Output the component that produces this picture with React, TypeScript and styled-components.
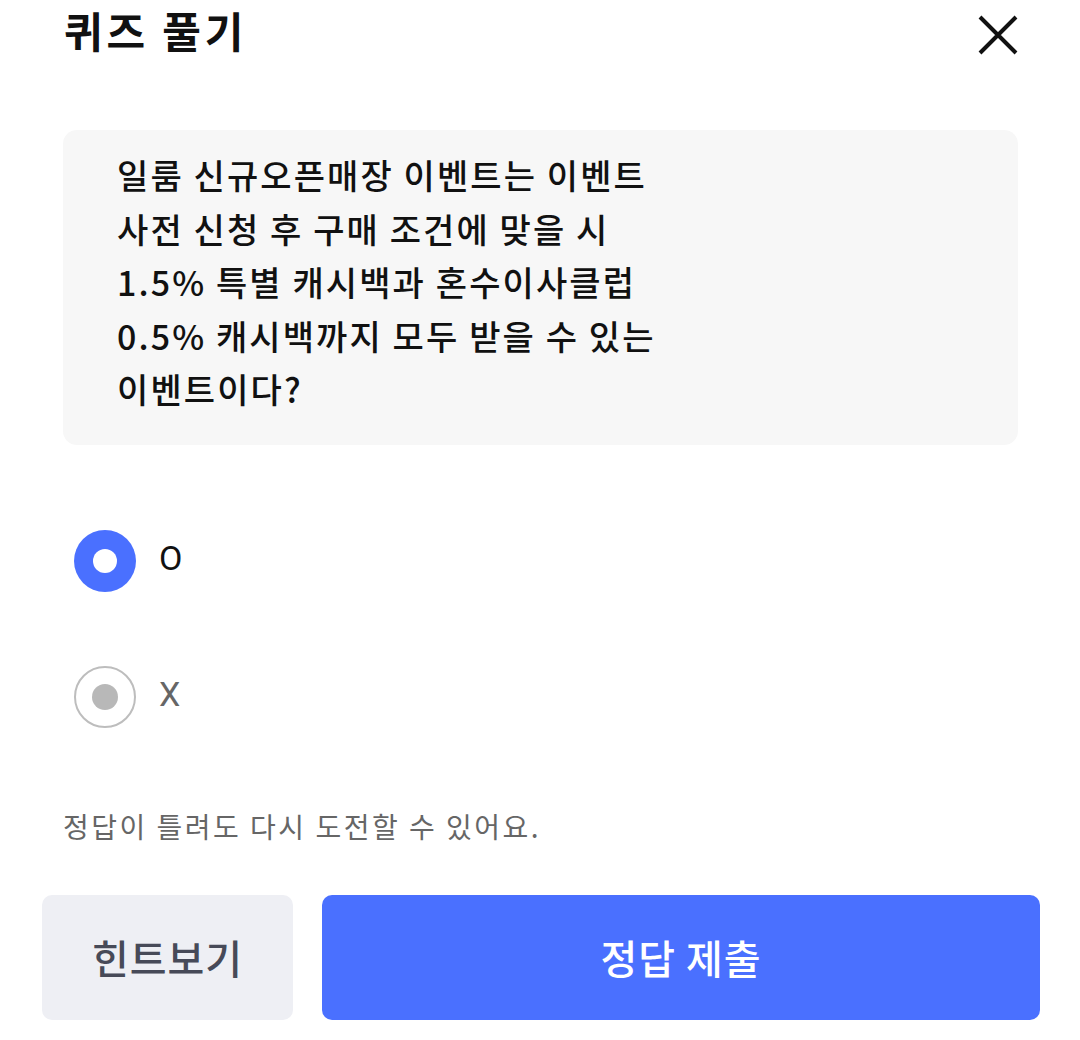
import React, {useState} from 'react'
import styled, {createGlobalStyle} from "styled-components"

const options = ['O', 'X']

function App() {
    const [picked, setPicked] = useState(0)

    return (
        <Main>
            <GlobalStyle />
            <Header>
                <Title>퀴즈 풀기</Title>
                <CloseButton aria-label="닫기">
                    <svg width="44" height="44" viewBox="0 0 44 44">
                        <path d="M4 4 L40 40 M40 4 L4 40" stroke="#111" strokeWidth="4" strokeLinecap="butt" />
                    </svg>
                </CloseButton>
            </Header>
            <Question>
                {`일룸 신규오픈매장 이벤트는 이벤트
사전 신청 후 구매 조건에 맞을 시
1.5% 특별 캐시백과 혼수이사클럽
0.5% 캐시백까지 모두 받을 수 있는
이벤트이다?`}
            </Question>
            <Options>
                {options.map((opt, i) => (
                    <Option key={opt} onClick={() => setPicked(i)}>
                        <Radio active={picked === i} />
                        <OptionLabel active={picked === i}>{opt}</OptionLabel>
                    </Option>
                ))}
            </Options>
            <Notice>정답이 틀려도 다시 도전할 수 있어요.</Notice>
            <Buttons>
                <HintButton>힌트보기</HintButton>
                <SubmitButton>정답 제출</SubmitButton>
            </Buttons>
        </Main>
    )
}

export default App

const GlobalStyle = createGlobalStyle`
    body {
        margin: 0;
        background: #fff;
        font-family: 'Noto Sans CJK KR', 'Noto Sans', sans-serif;
    }
`

const Main = styled.div`
    width: 1080px;
    height: 1040px;
    display: flex;
    flex-direction: column;
    overflow: hidden;
`

const Header = styled.div`
    display: flex;
    align-items: center;
    justify-content: space-between;
    height: 66px;
    padding: 0 60px 0 64px;
`

const Title = styled.h1`
    margin: 0;
    margin-top: -6px;
    font-size: 42px;
    font-weight: 700;
    color: #111;
    line-height: 66px;
    letter-spacing: 3.8px;
`

const CloseButton = styled.button`
    border: none;
    background: none;
    padding: 0;
    margin-top: 4px;
    display: flex;
    cursor: pointer;
`

const Question = styled.div`
    margin: 64px 62px 0 63px;
    background: #f7f7f7;
    border-radius: 14px;
    padding: 18px 50px 29px 54px;
    font-size: 34px;
    font-weight: 500;
    line-height: 53.5px;
    color: #111;
    white-space: pre-line;
    letter-spacing: 2.1px;
`

const Options = styled.div`
    display: flex;
    flex-direction: column;
    gap: 74px;
    margin: 85px 0 0 74px;
`

const Option = styled.div`
    display: flex;
    align-items: center;
    gap: 23px;
    cursor: pointer;
`

const Radio = styled.div<{active: boolean}>`
    width: 62px;
    height: 62px;
    border-radius: 50%;
    box-sizing: border-box;
    display: flex;
    align-items: center;
    justify-content: center;
    background: ${p => p.active ? '#4a70ff' : '#fff'};
    border: ${p => p.active ? 'none' : '2px solid #bdbdbd'};

    &::after {
        content: '';
        width: ${p => p.active ? 24 : 26}px;
        height: ${p => p.active ? 24 : 26}px;
        border-radius: 50%;
        background: ${p => p.active ? '#fff' : '#b8b8b8'};
    }
`

const OptionLabel = styled.span<{active: boolean}>`
    font-family: 'Roboto', 'Noto Sans', sans-serif;
    font-size: 34px;
    color: ${p => p.active ? '#111' : '#666'};
    margin-top: -6px;
`

const Notice = styled.p`
    margin: 78px 0 0 63px;
    font-size: 28px;
    line-height: 40px;
    color: #666;
    letter-spacing: 2.5px;
`

const Buttons = styled.div`
    display: flex;
    gap: 29px;
    margin: 49px 40px 0 42px;
    height: 125px;
`

const HintButton = styled.button`
    width: 251px;
    border: none;
    border-radius: 10px;
    background: #eeeff4;
    color: #474a58;
    font-family: 'Noto Sans CJK KR', sans-serif;
    font-size: 40px;
    font-weight: 500;
    letter-spacing: 1px;
    cursor: pointer;
`

const SubmitButton = styled.button`
    flex: 1;
    border: none;
    border-radius: 10px;
    background: #4a70ff;
    color: #fff;
    font-family: 'Noto Sans CJK KR', sans-serif;
    font-size: 40px;
    font-weight: 500;
    letter-spacing: 1px;
    cursor: pointer;
`
